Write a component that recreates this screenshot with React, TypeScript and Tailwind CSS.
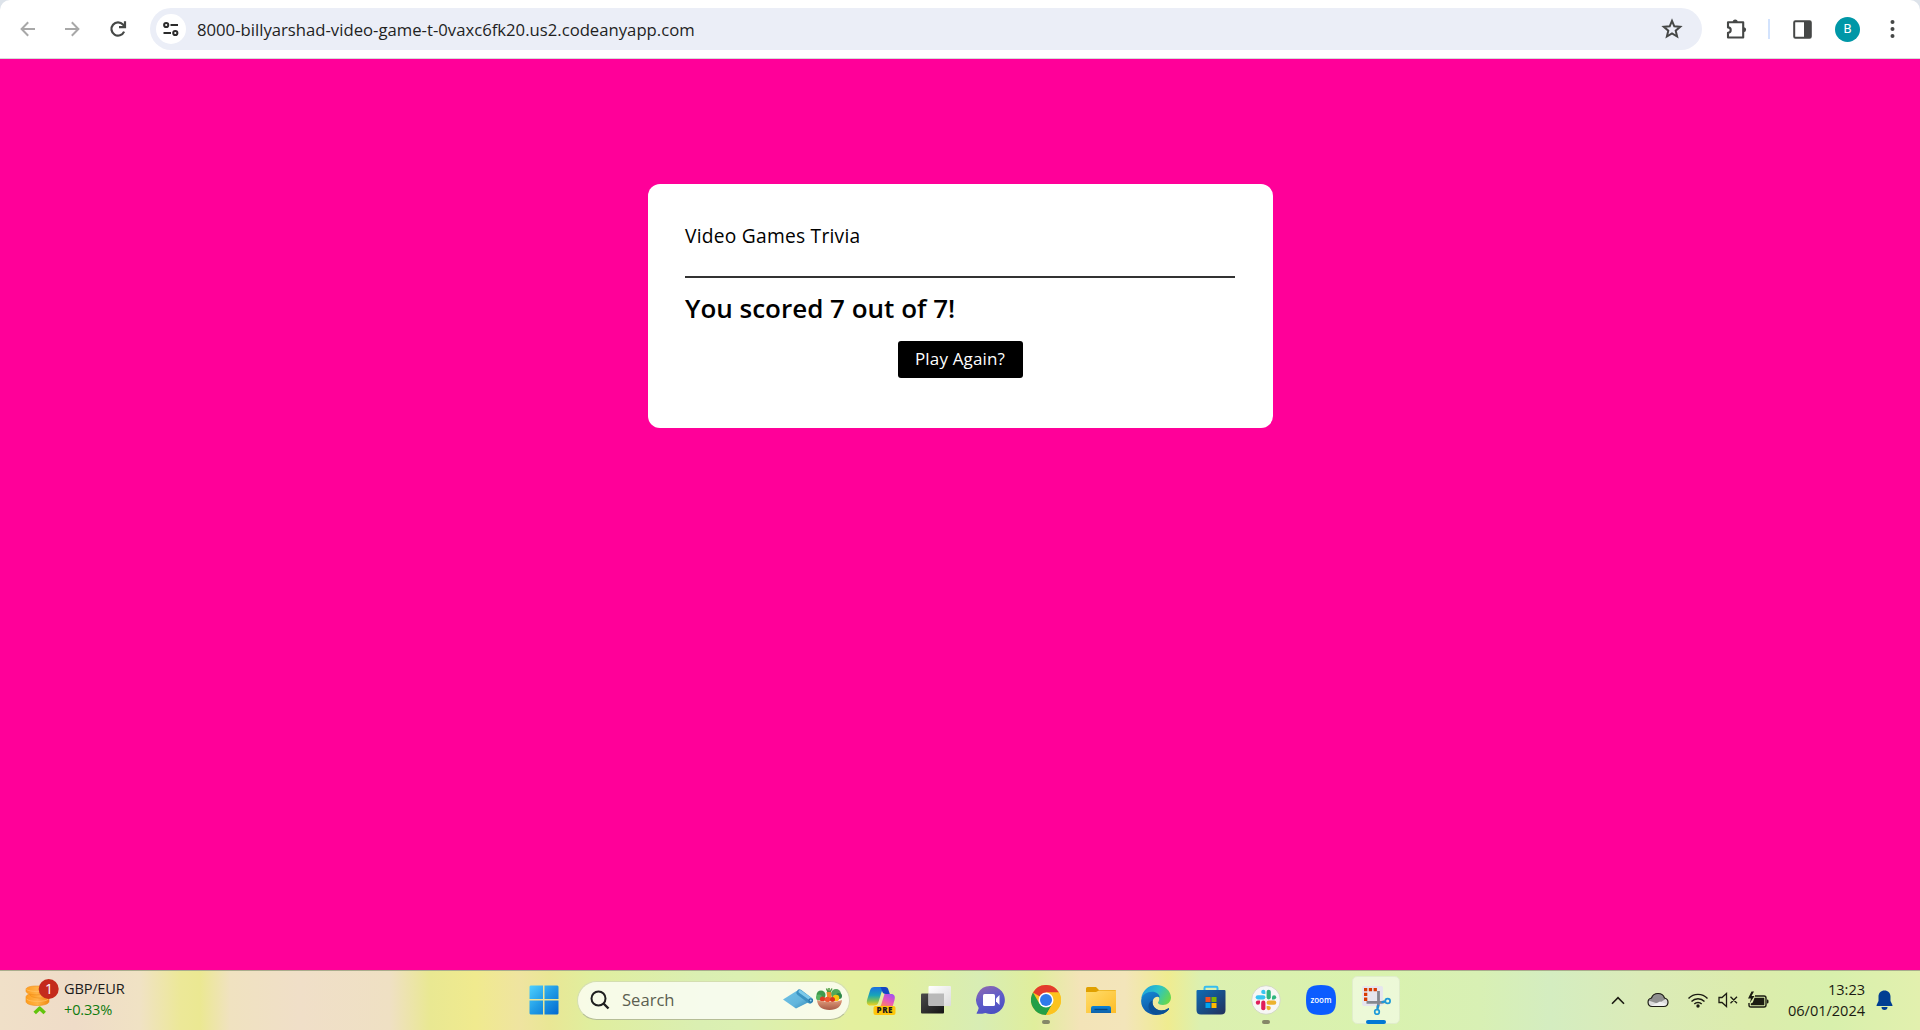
import type { ReactNode } from 'react';

const UI = "font-['Open_Sans','Noto_Sans',sans-serif]";

/* ---------- Browser toolbar ---------- */

function BackIcon({ flip = false }: { flip?: boolean }) {
  return (
    <svg width="20" height="20" viewBox="0 0 20 20" fill="none" stroke="#a8a8a8" strokeWidth="2" className={flip ? 'rotate-180' : ''}>
      <path d="M17 10H4M10.2 3.2 3.6 10l6.6 6.8" />
    </svg>
  );
}

function ReloadIcon() {
  return (
    <svg width="20" height="20" viewBox="0 0 20 20" fill="none" stroke="#454746" strokeWidth="2.2">
      <path d="M16.1 12.6A6.6 6.6 0 1 1 15 5.6L17 8" />
      <path d="M17 2.2V8.1H11" />
    </svg>
  );
}

function TuneIcon() {
  return (
    <svg width="18" height="16" viewBox="0 0 18 16" fill="none" stroke="#2b2b2b" strokeWidth="2">
      <circle cx="4.2" cy="4" r="2.1" />
      <path d="M8.5 4H16M1.5 12H9" />
      <circle cx="13.3" cy="12" r="2.1" />
    </svg>
  );
}

function StarIcon() {
  return (
    <svg width="22" height="22" viewBox="0 0 22 22" fill="none" stroke="#454746" strokeWidth="2">
      <path d="m11 2.800 2.300 5.500 5.900.5-4.500 3.900 1.400 5.800-5.100-3.100-5.100 3.100 1.400-5.800-4.500-3.900 5.900-.5z" />
    </svg>
  );
}

function PuzzleIcon() {
  return (
    <svg width="22" height="22" viewBox="0 0 22 22">
      <path d="M3 4.3h15.2v15.2H3v-4.7a2.7 2.7 0 0 0 0-5.4z" fill="none" stroke="#454746" strokeWidth="2.1" strokeLinejoin="round" />
      <path d="M7.7 4a2.5 2.5 0 0 1 5 0zM18.6 9.2a2.5 2.5 0 0 1 0 5z" fill="#454746" />
    </svg>
  );
}

function SidePanelIcon() {
  return (
    <svg width="19" height="19" viewBox="0 0 19 19">
      <rect x="1.2" y="1.2" width="16.6" height="16.6" rx="1.2" fill="none" stroke="#454746" strokeWidth="2" />
      <path d="M11 1h7v17h-7z" fill="#454746" />
    </svg>
  );
}

function Toolbar() {
  return (
    <div className="bg-[#dde3ea]">
      <header className="flex h-[59px] items-center rounded-t-[10px] border-b border-[#d5dbd9] bg-white pl-[18px]">
        <BackIcon />
        <div className="ml-[24px]"><BackIcon flip /></div>
        <div className="ml-[26px]"><ReloadIcon /></div>
        <div className="ml-[22px] flex h-[42px] w-[1552px] items-center rounded-full bg-[#ebeef7] pr-[19px] pl-[6px]">
          <div className="flex size-[30px] items-center justify-center rounded-full bg-white"><TuneIcon /></div>
          <span className="ml-[11px] pt-px text-[16.7px] text-[#1f1f1f]">8000-billyarshad-video-game-t-0vaxc6fk20.us2.codeanyapp.com</span>
          <div className="ml-auto"><StarIcon /></div>
        </div>
        <div className="ml-[23px]"><PuzzleIcon /></div>
        <div className="ml-[21px] h-5 w-[2px] bg-[#d3e3fd]" />
        <div className="ml-[23px]"><SidePanelIcon /></div>
        <div className="ml-[23px] flex size-[25px] items-center justify-center rounded-full bg-[#0097a7] font-[Roboto,sans-serif] text-[13px] text-white">B</div>
        <svg className="ml-[30px]" width="5" height="20" viewBox="0 0 5 20" fill="#454746">
          <circle cx="2.5" cy="3" r="2" /><circle cx="2.5" cy="10" r="2" /><circle cx="2.5" cy="17" r="2" />
        </svg>
      </header>
    </div>
  );
}

/* ---------- Quiz result ---------- */

function ResultCard() {
  return (
    <section className="h-[244px] w-[625px] rounded-[12px] bg-white pt-[36px] pr-[38px] pl-[37px] text-black">
      <p className="h-[31px] text-[19.2px] leading-[31px] tracking-[0.25px]">Video Games Trivia</p>
      <hr className="mt-[25px] border-t-2 border-[#333]" />
      <h1 className="mt-[14px] text-[26px] leading-[32px] font-semibold">You scored 7 out of 7!</h1>
      <button className="mx-auto mt-[17px] flex h-[37px] w-[125px] items-center justify-center rounded-[3px] bg-black pb-px text-[17px] tracking-[0.15px] text-white">
        Play Again?
      </button>
    </section>
  );
}

/* ---------- Taskbar icons ---------- */

function CoinsIcon() {
  return (
    <svg width="36" height="40" viewBox="0 0 36 40">
      <defs>
        <linearGradient id="coin" x1="0" x2="1"><stop offset="0" stopColor="#ff9d1c" /><stop offset="0.5" stopColor="#ffb347" /><stop offset="1" stopColor="#f08a12" /></linearGradient>
      </defs>
      <g fill="url(#coin)" stroke="#ee8d1d" strokeWidth="0.6">
        <path d="M2 20c0-2.400 5-4 11.500-4S25 17.600 25 20v4.500c0 2.400-5 4-11.500 4S2 26.900 2 24.500z" />
        <path d="M6 15c0-2.400 4-4 10-4s10 1.600 10 4v2.500c0 2-4 3.500-10 3.500S6 19.500 6 17.500z" />
        <path d="M2 12.500C2 10.300 6 9 12.500 9S24 10.300 24 12.500V14c0 2.300-5 3.800-11.500 3.800S2 16.300 2 14z" />
      </g>
      <path d="M2.500 22c3 3.200 19 3.200 22 0M2.500 12.600c3 2.400 18 2.400 21 0" fill="none" stroke="#ffc266" strokeWidth="0.800" />
      <path d="m10.700 36 5-4.800 5 4.800" fill="none" stroke="#62c40d" strokeWidth="3.600" strokeLinejoin="round" />
      <circle cx="24.700" cy="12" r="10" fill="#c42b1c" />
      <text x="25" y="17" textAnchor="middle" fontFamily="Open Sans, sans-serif" fontSize="14" fill="#fff">1</text>
    </svg>
  );
}

function WindowsIcon() {
  return (
    <svg width="30" height="30" viewBox="0 0 30 30">
      <defs>
        <linearGradient id="win" x1="0" y1="0" x2="30" y2="30" gradientUnits="userSpaceOnUse"><stop offset="0" stopColor="#4fd2ff" /><stop offset="0.5" stopColor="#209be5" /><stop offset="1" stopColor="#0067cf" /></linearGradient>
      </defs>
      <path d="M1.500.5H14V14H.5V1.500zM15.500.5h13l1 1V14h-14zM.5 15.500H14v14H1.500l-1-1zM15.500 15.500h14v13l-1 1h-13z" fill="url(#win)" />
    </svg>
  );
}

function SearchArt() {
  return (
    <svg width="62" height="26" viewBox="0 0 62 26">
      <defs>
        <linearGradient id="mat" x1="0" y1="0" x2="1" y2="1"><stop offset="0" stopColor="#6fc3e6" /><stop offset="0.6" stopColor="#62b5dc" /><stop offset="1" stopColor="#2f86b5" /></linearGradient>
        <linearGradient id="bowl" x1="0" y1="0" x2="0" y2="1"><stop offset="0" stopColor="#e09c7c" /><stop offset="1" stopColor="#a85a45" /></linearGradient>
      </defs>
      <path d="M1 12.500 14.500 4 28 14.500 14 21.500z" fill="url(#mat)" />
      <path d="m17.500 5.500 10.500 8" stroke="#3b93c2" strokeWidth="6" strokeLinecap="round" />
      <path d="m18 4.500 10.500 7.500" stroke="#7ccaea" strokeWidth="3" strokeLinecap="round" />
      <circle cx="28.700" cy="13.500" r="2.300" fill="#2876a6" />
      <circle cx="28.700" cy="13.500" r="1" fill="#8ed3ef" />
      <circle cx="39" cy="8" r="4.500" fill="#3f9a4d" />
      <circle cx="37" cy="10.500" r="3" fill="#58b560" />
      <circle cx="54" cy="7" r="5" fill="#51a85a" />
      <circle cx="57" cy="9" r="3" fill="#2f8748" />
      <path d="m44.500 5 4.500-.5 1 9h-4.500z" fill="#f08a2a" />
      <path d="M46 5 44.500 1.500M47 5V1M48 5l2-3.500" stroke="#4b9b3d" strokeWidth="1.500" />
      <circle cx="54" cy="11" r="3.300" fill="#f9c70f" />
      <circle cx="40.500" cy="12" r="2.600" fill="#de3e25" />
      <circle cx="45.500" cy="12.500" r="2.800" fill="#ef5630" />
      <circle cx="50.500" cy="12.500" r="2.500" fill="#d8351f" />
      <path d="M35 13c5 2.500 20 2.500 25 0-.5 6.500-5 10-12.500 10S35.500 19.500 35 13z" fill="url(#bowl)" />
    </svg>
  );
}

function CopilotIcon() {
  return (
    <svg width="30" height="30" viewBox="0 0 30 30">
      <defs>
        <linearGradient id="cpA" x1="0" y1="0" x2="0" y2="1"><stop offset="0" stopColor="#1a6fe0" /><stop offset="0.450" stopColor="#18a5b8" /><stop offset="0.750" stopColor="#7cc353" /><stop offset="1" stopColor="#f5d21c" /></linearGradient>
        <linearGradient id="cpB" x1="0.800" y1="0" x2="0.200" y2="1"><stop offset="0" stopColor="#a451ef" /><stop offset="0.500" stopColor="#e85ab9" /><stop offset="1" stopColor="#ff8b4b" /></linearGradient>
      </defs>
      <path d="M8.500 2h11.500c-3 1-4 3.500-5.200 7.500L12.500 17c-.8 2.600-2 3.500-4.500 3.500H4.500C1 20.500.3 18 1.200 14.500L4 5.500C4.800 3 6 2 8.500 2z" fill="url(#cpA)" />
      <path d="M14 2h5c2.200 0 3 1 3.600 3.200L23.800 9H20c-2.500 0-3.200-.8-4.200-3.500C15 3.500 15.500 2.500 14 2z" fill="#1446c4" />
      <path d="M18.500 9h6.500c3.500 0 4.500 2.500 3.500 6l-2 7H12.500c2 0 2.800-2 3.500-5z" fill="url(#cpB)" />
      <rect x="7.500" y="21" width="22" height="9" rx="2" fill="#ffc60a" />
      <text x="18.500" y="28.300" textAnchor="middle" fontFamily="Open Sans, sans-serif" fontWeight="800" fontSize="8" textLength="16" fill="#1a1a1a">PRE</text>
    </svg>
  );
}

function TaskViewIcon() {
  return (
    <svg width="30" height="30" viewBox="0 0 30 30">
      <defs>
        <linearGradient id="tvA" x1="0" y1="0" x2="1" y2="1"><stop offset="0" stopColor="#4b4b4b" /><stop offset="1" stopColor="#151515" /></linearGradient>
        <linearGradient id="tvB" x1="0" y1="0" x2="1" y2="1"><stop offset="0" stopColor="#fff" /><stop offset="1" stopColor="#dcdcdc" /></linearGradient>
      </defs>
      <rect x="0" y="8.500" width="23" height="20" rx="1" fill="url(#tvA)" />
      <rect x="7.500" y="1" width="22.500" height="20" rx="1" fill="url(#tvB)" />
      <path d="M7.500 8.500H23V21H8.500l-1-1z" fill="#b9b9b9" />
    </svg>
  );
}

function ChatIcon() {
  return (
    <svg width="30" height="30" viewBox="0 0 30 30">
      <defs>
        <linearGradient id="chat" x1="0.200" y1="0" x2="0.600" y2="1"><stop offset="0" stopColor="#8c68b0" /><stop offset="0.500" stopColor="#5f5cc9" /><stop offset="1" stopColor="#4a4fc2" /></linearGradient>
      </defs>
      <path d="M15 1a14 14 0 1 1-5.600 26.900c-2.500.8-5.500 1.100-8.400.9-.4 0-.5-.4-.3-.7 1-1.600 1.700-3.300 2-5.100A14 14 0 0 1 15 1z" fill="url(#chat)" />
      <rect x="7" y="9" width="12" height="12" rx="1.500" fill="#fff" />
      <path d="m20 13.500 3.500-3.500v10L20 16.500z" fill="#fff" />
    </svg>
  );
}

function ChromeIcon() {
  return (
    <svg width="30" height="30" viewBox="0 0 30 30">
      <circle cx="15" cy="15" r="15" fill="#fcc31e" />
      <path d="M15 15 2 7.500A15 15 0 0 1 28 7.500H15z" fill="#e33b2e" />
      <path d="M2 7.500A15 15 0 0 0 15 30l6.500-11.250L15 15 8.500 18.750z" fill="#23a047" />
      <path d="M15 7.500H28A15 15 0 0 1 15 30l6.500-11.250z" fill="#fcc31e" />
      <circle cx="15" cy="15" r="7.500" fill="#fff" />
      <circle cx="15" cy="15" r="6" fill="#2f7bea" />
    </svg>
  );
}

function FolderIcon() {
  return (
    <svg width="30" height="28" viewBox="0 0 30 28">
      <defs>
        <linearGradient id="fold" x1="0" y1="0" x2="1" y2="1"><stop offset="0" stopColor="#ffdc6b" /><stop offset="1" stopColor="#fdbd27" /></linearGradient>
        <linearGradient id="foldB" x1="0" y1="0" x2="0" y2="1"><stop offset="0" stopColor="#0a83d8" /><stop offset="1" stopColor="#0f62a8" /></linearGradient>
      </defs>
      <path d="M0 2.500Q0 1 1.500 1H10l3 3h16q1 0 1 1v4H0z" fill="#e0a000" />
      <path d="M0 6h10l3-1.500h17V27H0z" fill="url(#fold)" />
      <path d="M5 27v-5q0-2 2-2h16q2 0 2 2v5z" fill="url(#foldB)" />
      <path d="M8.500 23.500h13" stroke="#06477f" strokeWidth="1.300" />
    </svg>
  );
}

function EdgeIcon() {
  return (
    <svg width="30" height="30" viewBox="0 0 30 30">
      <defs>
        <linearGradient id="edA" x1="0" y1="0.200" x2="1" y2="0.600"><stop offset="0" stopColor="#1c9ede" /><stop offset="0.500" stopColor="#2bc3c9" /><stop offset="1" stopColor="#66d84c" /></linearGradient>
        <linearGradient id="edB" x1="0" y1="0" x2="0.500" y2="1"><stop offset="0" stopColor="#1589d6" /><stop offset="1" stopColor="#0c4f9d" /></linearGradient>
      </defs>
      <path d="M.3 13.500C1 6 7.300 0 15 0c9 0 15 6.300 15 12.500 0 4.500-3.500 7.500-8 7.500-3.500 0-5-1.300-5-2.300 0-.8 1.200-1.400 1.200-3.700 0-3-3-5.500-7.200-5.500-5 0-8.500 2-10.700 5z" fill="url(#edA)" />
      <path d="M.2 15C1 9.500 6 6.800 11 6.800c4.500 0 7.500 2.700 7.700 5.700-1.500-1.300-6-1.200-7 3.500-1 5 3 9.500 8.500 9.500 3 0 5-.8 6.800-2 .7-.4 1.300.2.900.8C25.500 27.700 20.500 30 15 30 6 30-.6 23 .2 15z" fill="url(#edB)" />
      <path d="M11.700 15.500c-1.200 5 3 9.900 8.500 9.900 3 0 5-.8 6.800-2 .7-.4 1.300.2.900.8-2.400 3.500-6.500 5.200-10.900 5.200-6 0-9.500-4.200-9.500-8.200 0-2.800 1.700-4.900 4.200-5.700z" fill="#0b5196" />
    </svg>
  );
}

function StoreIcon() {
  return (
    <svg width="30" height="30" viewBox="0 0 30 30">
      <defs>
        <linearGradient id="store" x1="0" y1="0" x2="1" y2="1"><stop offset="0" stopColor="#0d6cb4" /><stop offset="1" stopColor="#23305c" /></linearGradient>
      </defs>
      <path d="M8.500 7V3q0-1.300 1.300-1.300h10.400q1.300 0 1.300 1.300v4" fill="none" stroke="#35bdf0" strokeWidth="2" />
      <path d="M.5 6q0-1 1-1h27q1 0 1 1v19q0 4.500-4.500 4.500H5Q.5 29.500.5 25z" fill="url(#store)" />
      <path d="M9.500 12h5v5h-5z" fill="#f25022" /><path d="M15.500 12h5v5h-5z" fill="#7fba00" />
      <path d="M9.500 18h5v5h-5z" fill="#00a4ef" /><path d="M15.500 18h5v5h-5z" fill="#ffb900" />
    </svg>
  );
}

function SlackIcon() {
  return (
    <svg width="30" height="30" viewBox="0 0 30 30">
      <circle cx="15" cy="15" r="14.300" fill="#f7f7f5" stroke="#cfd3c4" strokeWidth="0.800" />
      <g strokeWidth="4.200" strokeLinecap="round">
        <path d="M6.800 12.300h5.500" stroke="#36c5f0" />
        <path d="M17.700 6.800v5.500" stroke="#2eb67d" />
        <path d="M17.700 17.700h5.500" stroke="#ecb22e" />
        <path d="M12.300 17.700v5.500" stroke="#e01e5a" />
      </g>
      <path d="M14.400 9h-2.100a2.100 2.100 0 1 1 2.100-2.100z" fill="#36c5f0" />
      <path d="M21 14.400v-2.100a2.100 2.100 0 1 1 2.100 2.100z" fill="#2eb67d" />
      <path d="M15.600 21h2.100a2.100 2.100 0 1 1-2.100 2.100z" fill="#ecb22e" />
      <path d="M9 15.600v2.100a2.100 2.100 0 1 1-2.100-2.100z" fill="#e01e5a" />
    </svg>
  );
}

function ZoomIcon() {
  return (
    <svg width="30" height="30" viewBox="0 0 30 30">
      <path d="M15 0c11.500 0 15 3.500 15 15s-3.500 15-15 15S0 26.500 0 15 3.500 0 15 0z" fill="#0b5cff" />
      <text x="15" y="17.500" textAnchor="middle" fontFamily="Open Sans, sans-serif" fontWeight="600" fontSize="8" textLength="21" lengthAdjust="spacingAndGlyphs" fill="#fff">zoom</text>
    </svg>
  );
}

function SnipIcon() {
  return (
    <svg width="32" height="30" viewBox="0 0 32 30">
      <rect x="2" y="1" width="21" height="20" rx="2" fill="#e6e6ee" />
      <path d="M4 3h3.300v3.300H4zM8.800 3h3.300v3.300H8.800zM13.600 3h3.300v3.300h-3.300zM4 7.800h3.300v3.300H4zM4 12.600h3.300v3.300H4z" fill="#d83b01" />
      <path d="M18.500 6v12c0 2-.6 3.600-1 5M6.500 17.300h15c1.500 0 2.500-.3 3.500-.8" fill="none" stroke="#85888f" strokeWidth="2.800" />
      <path d="m18.300 20-1 4.500M21.500 17.300l3.500-.8" stroke="#1f97d8" strokeWidth="2.200" />
      <circle cx="17" cy="27" r="2.300" fill="none" stroke="#1d9ad9" strokeWidth="1.700" />
      <circle cx="27.700" cy="16" r="2.400" fill="none" stroke="#1d9ad9" strokeWidth="1.700" />
    </svg>
  );
}

function Slot({ children, running = false, active = false }: { children: ReactNode; running?: boolean; active?: boolean }) {
  return (
    <div className="flex w-[55px] justify-center">
      <div className={`relative flex size-12 items-center justify-center ${active ? 'rounded-[5px] border border-[#e0edcb] bg-white/50' : ''}`}>
        {children}
        {running && <span className="absolute bottom-0 left-5 h-1 w-2 rounded-full bg-[#858768]" />}
        {active && <span className="absolute -bottom-px left-[13px] h-1 w-5 rounded-full bg-[#0078d4]" />}
      </div>
    </div>
  );
}

function Tray() {
  return (
    <div className="ml-auto flex h-full items-center pr-[27px] text-[#1b1b12]">
      <svg width="14" height="9" viewBox="0 0 14 9" fill="none" stroke="currentColor" strokeWidth="1.600"><path d="m1 7.700 6-6 6 6" /></svg>
      <svg className="ml-[22px]" width="22" height="16" viewBox="0 0 22 16">
        <path d="M5 14.500a4.300 4.300 0 0 1-.5-8.500C5.500 3 8 1.500 11 1.500c3.500 0 5.700 2 6.500 4.500 2.200.5 3.500 2 3.500 4.300 0 2.500-1.800 4.200-4.300 4.200z" fill="#dcdcdc" />
        <path d="M1.500 8.500 4.500 6C5.500 3 8 1.500 11 1.500c3.500 0 5.700 2 6.500 4.500l1.500.8-8 5z" fill="#8f8f8f" />
        <path d="m4 14 9-4.500 7.500 3c-.8 1.300-2 2-3.800 2H5z" fill="#f0f0f0" />
        <path d="M5 14.500a4.300 4.300 0 0 1-.5-8.500C5.500 3 8 1.500 11 1.500c3.500 0 5.700 2 6.500 4.500 2.200.5 3.500 2 3.500 4.300 0 2.500-1.800 4.200-4.300 4.200z" fill="none" stroke="#1b1b12" strokeWidth="1.200" />
      </svg>
      <svg className="ml-[18px]" width="22" height="18" viewBox="0 0 22 18" fill="none" stroke="currentColor" strokeWidth="1.400">
        <path d="M1.500 7.500a13 13 0 0 1 19 0M4.500 10.500a9 9 0 0 1 13 0M7.300 13a5.300 5.300 0 0 1 7.400 0" />
        <circle cx="11" cy="15" r="1.700" fill="currentColor" stroke="none" />
      </svg>
      <svg className="ml-[9px]" width="20" height="16" viewBox="0 0 20 16" fill="none" stroke="currentColor" strokeWidth="1.300">
        <path d="M1 5.500h3L8.500 1.500v13L4 10.500H1zM12.500 4.800l6.500 6.500M19 4.800l-6.500 6.500" />
      </svg>
      <svg className="ml-[9px]" width="22" height="18" viewBox="0 0 22 18">
        <path d="M8 5h9q2 0 2 2v7q0 2-2 2H4q-2 0-2-2v-2" fill="none" stroke="currentColor" strokeWidth="1.400" />
        <path d="M7.500 6.700h9.800v7.600H3.800V12.500l2-1zM20 8.500q1.500 0 1.500 1.200v1.600q0 1.200-1.500 1.200zM4.500.5 1 7.500h3L2.800 12 7.500 5h-3L7 .5z" fill="currentColor" />
      </svg>
      <div className="ml-[19px] pb-px text-right text-[14.600px] leading-[21px] -tracking-[0.050px]">
        <div>13:23</div>
        <div>06/01/2024</div>
      </div>
      <svg className="ml-[11px]" width="17" height="20" viewBox="0 0 17 20" fill="#003e92">
        <path d="M8.500.5c3.600 0 6 2.600 6 6V11l2 4.200c.2.500 0 .8-.5.800H1c-.5 0-.7-.3-.5-.8L2.500 11V6.500c0-3.400 2.400-6 6-6zM5.500 17h6a3 3 0 0 1-6 0z" />
      </svg>
    </div>
  );
}

const WALLPAPER =
  'bg-[linear-gradient(90deg,#f0e0c8_0px,#efdcc8_75px,#f0e2c4_140px,#ece898_180px,#ebe892_200px,#f0e2c0_230px,#f0dfc8_300px,#efe0c3_390px,#e9e892_430px,#f0ea8e_475px,#efe4a0_520px,#e9e795_550px,#e0ee9e_590px,#daefb2_700px,#dbf0b2_740px,#e4f09e_850px,#e2f09e_890px,#d8edb4_980px,#e0ee9c_1035px,#f3e4b8_1080px,#f3e5ba_1125px,#efec90_1168px,#dcf0b0_1200px,#d9f2ae_1370px,#d8f0b4_1480px,#d4edc0_1550px,#dbebb8_1640px,#dcecac_1750px,#d8f0ac_1830px,#e2f0ae_1920px)]';

function Taskbar() {
  return (
    <footer className={`flex h-[60px] items-center border-t border-[#a9ad8c] pb-px ${WALLPAPER}`}>
      <div className="flex w-[529px] items-center pl-[24px]">
        <div className="-mt-[7px]"><CoinsIcon /></div>
        <div className="ml-[4px] pb-[2px] text-[14.600px] leading-[21px] -tracking-[0.200px]">
          <div className="text-[#1b1b1b]">GBP/EUR</div>
          <div className="text-[#0f7b0f]">+0.33%</div>
        </div>
      </div>
      <WindowsIcon />
      <div className="ml-[18px] flex h-[39px] w-[273px] items-center rounded-full border border-[#d4deb0] border-b-[#b5bd96] bg-white/75 pr-[5px] pl-[12px]">
        <svg width="20" height="20" viewBox="0 0 20 20" fill="none" stroke="#1f1f1f" strokeWidth="2"><circle cx="8.500" cy="8.500" r="7" /><path d="m13.500 13.500 5 5" strokeWidth="2.400" /></svg>
        <span className="ml-[12px] pt-px text-[16.600px] text-[#5c5f50]">Search</span>
        <div className="ml-auto"><SearchArt /></div>
      </div>
      <div className="ml-[3px] flex items-center">
        <Slot><CopilotIcon /></Slot>
        <Slot><TaskViewIcon /></Slot>
        <Slot><ChatIcon /></Slot>
        <Slot running><ChromeIcon /></Slot>
        <Slot><FolderIcon /></Slot>
        <Slot><EdgeIcon /></Slot>
        <Slot><StoreIcon /></Slot>
        <Slot running><SlackIcon /></Slot>
        <Slot><ZoomIcon /></Slot>
        <Slot active><SnipIcon /></Slot>
      </div>
      <Tray />
    </footer>
  );
}

export default function App() {
  return (
    <div className={`flex h-[1030px] w-[1920px] flex-col overflow-hidden ${UI}`}>
      <Toolbar />
      <main className="flex flex-1 justify-center bg-[#ff0099] pt-[125px] pl-px">
        <ResultCard />
      </main>
      <Taskbar />
    </div>
  );
}
